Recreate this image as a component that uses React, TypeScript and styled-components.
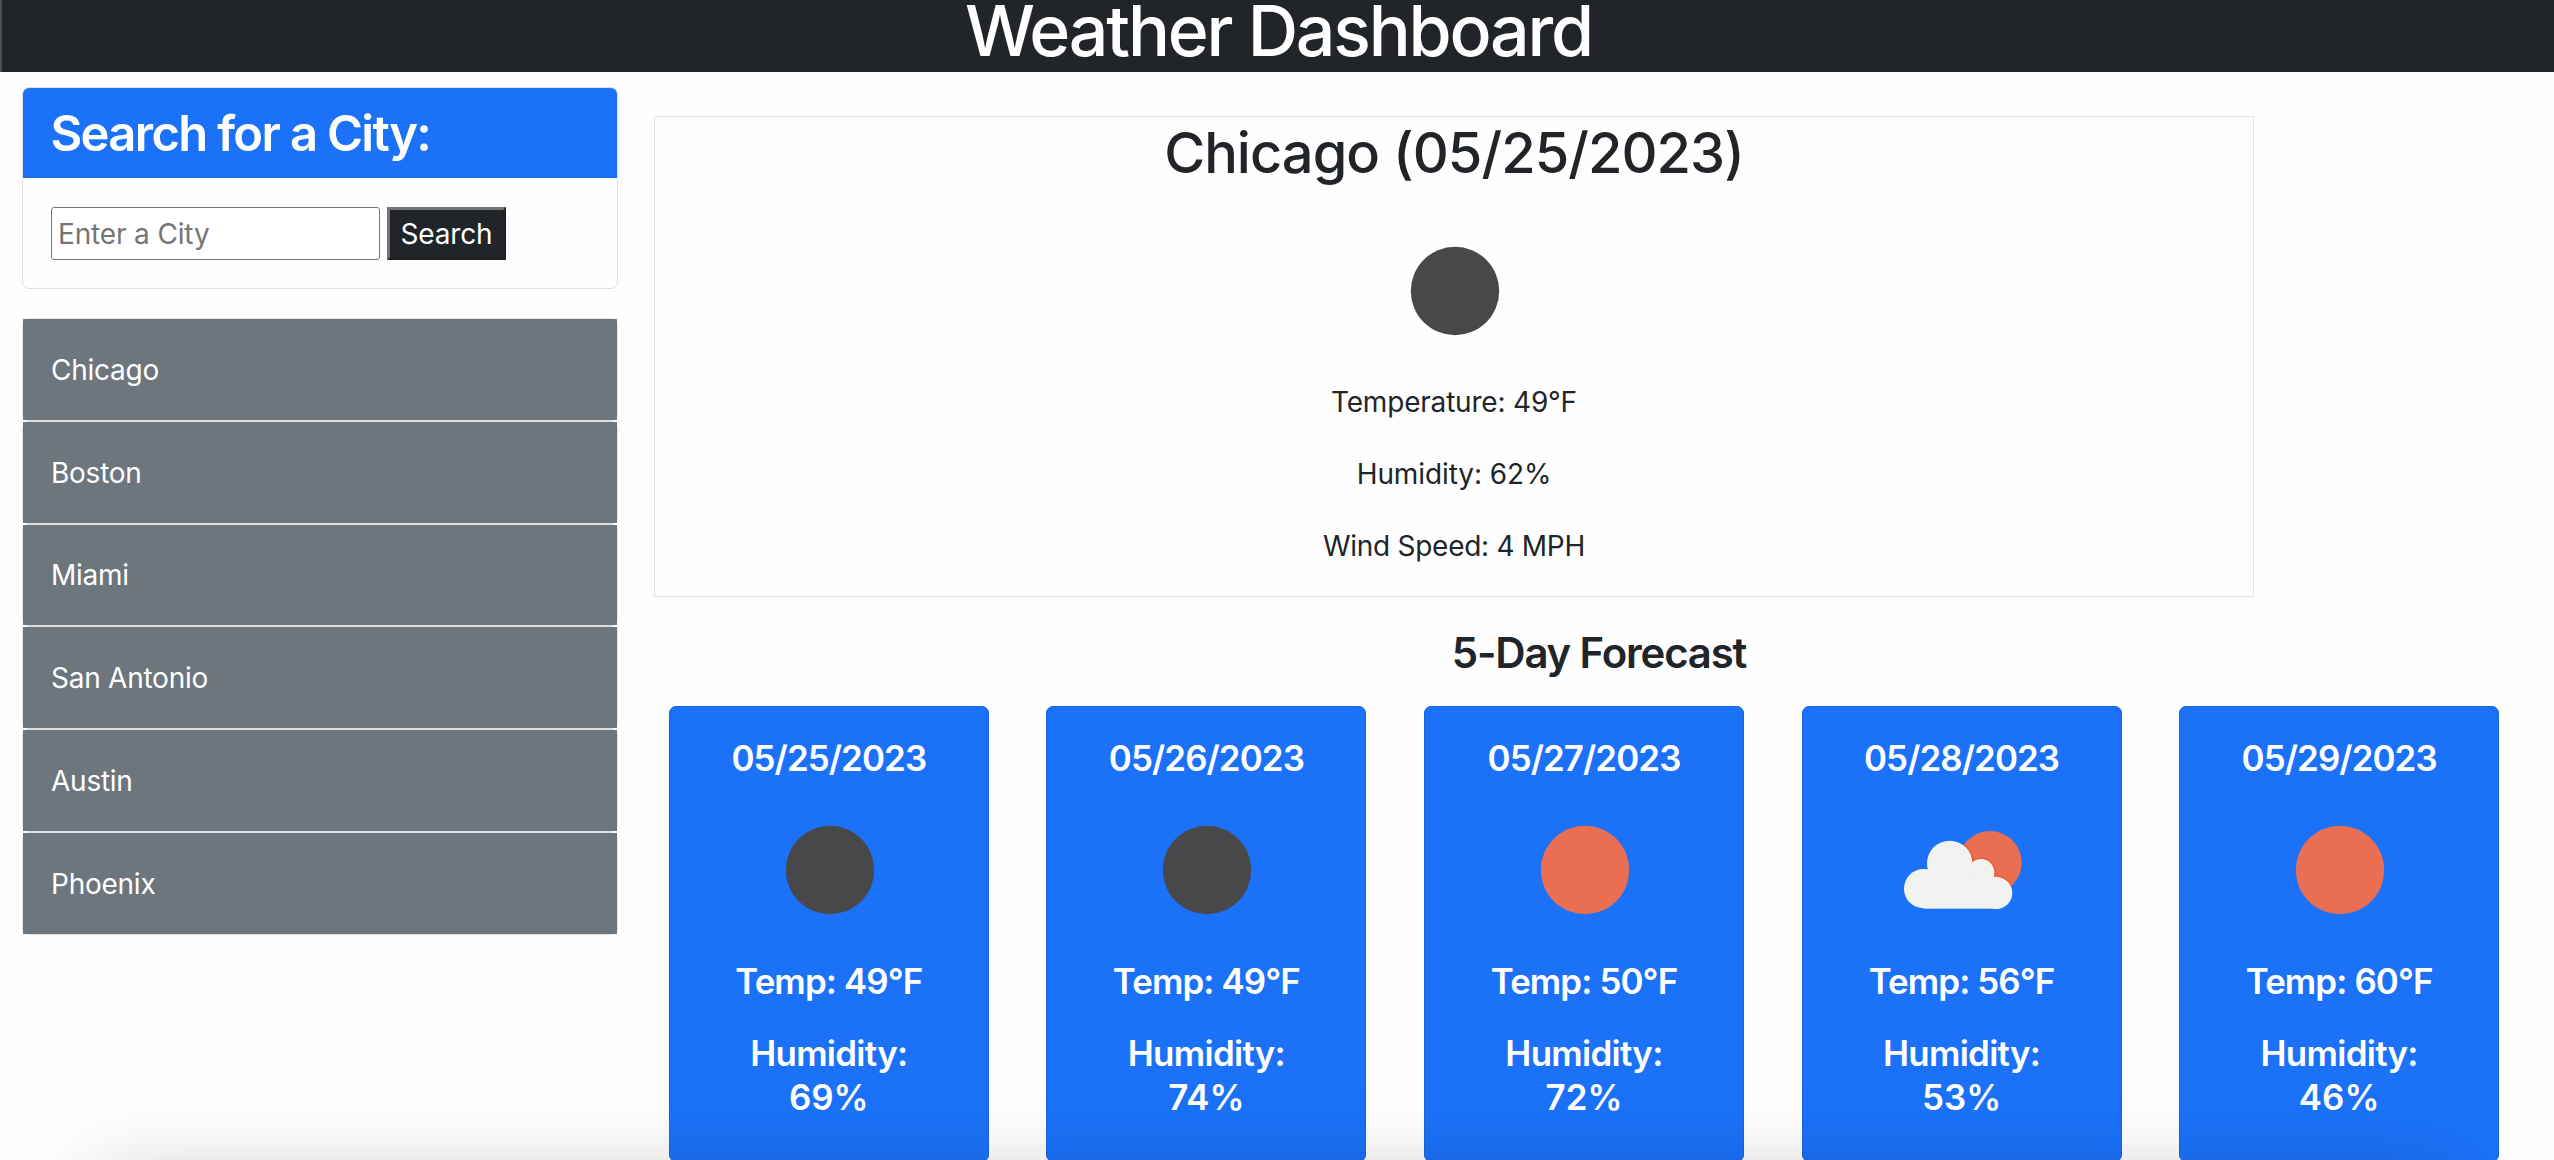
import React from "react";
import styled, { createGlobalStyle } from "styled-components";

const GlobalStyle = createGlobalStyle`
  *, *::before, *::after { box-sizing: border-box; }
  html, body { margin: 0; height: 1160px; overflow: hidden; }
  body {
    background: #fefefe;
    color: #212529;
    font-family: Inter, "Liberation Sans", sans-serif;
    font-size: 28px;
    line-height: 43.2px;
  }
  h1, h2, h3, h4, h5, p { margin: 0; font-weight: 600; }
`;

const Page = styled.div`
  height: 1160px;
  overflow: hidden;
`;

const Header = styled.header`
  height: 72px;
  background: #212529;
  border-left: 2px solid #4a4e52;
  text-align: center;
`;

const Title = styled.h1`
  color: #fff;
  font-size: 69.8px;
  font-weight: 550;
  line-height: 61px;
  letter-spacing: -2.2px;
  padding-left: 1px;
`;

const Layout = styled.main`
  display: flex;
  align-items: flex-start;
`;

const Sidebar = styled.aside`
  width: 596px;
  margin: 15px 0 0 22px;
  flex: none;
`;

const SearchCard = styled.section`
  height: 202px;
  border: 1px solid #dfdfdf;
  border-radius: 7px;
  overflow: hidden;
`;

const SearchHeader = styled.div`
  height: 90px;
  padding: 16px 27.4px 12px;
  background: #1b72f9;
  border-bottom: 1px solid #1a67df;
`;

const SearchTitle = styled.h3`
  color: #fff;
  font-size: 48.9px;
  line-height: 60.5px;
  letter-spacing: -1.65px;
`;

const SearchForm = styled.form`
  display: flex;
  gap: 7px;
  padding: 29px 28px;
`;

const CityInput = styled.input`
  width: 329px;
  height: 53px;
  padding: 2px 6px;
  border: 1px solid #767676;
  border-radius: 3px;
  background: #fff;
  font: inherit;
  letter-spacing: -0.15px;
  &::placeholder { color: #757575; }
`;

const SearchButton = styled.button`
  width: 119px;
  height: 53px;
  padding: 0;
  border: 3px solid;
  border-color: #767676 #212121 #212121 #767676;
  border-radius: 0;
  background: #212529;
  color: #fff;
  font: inherit;
  line-height: 46px;
  letter-spacing: -0.17px;
`;

const CityList = styled.div`
  margin-top: 29px;
`;

const CityCard = styled.div`
  height: 102.8px;
  border: 1px solid #dfdfdf;
  border-radius: 7px;
`;

const CityBody = styled.div`
  height: 100.8px;
  padding: 29.8px 28px 27.8px;
  background: #6d757d;
  color: #fff;
  letter-spacing: -0.25px;
`;

const Content = styled.div`
  margin-left: 36px;
  width: 1890px;
`;

const Current = styled.section`
  width: 1600px;
  height: 481px;
  margin-top: 44px;
  padding-top: 1px;
  border: 1px solid #dee2e6;
  display: flex;
  flex-direction: column;
  align-items: center;
`;

const CityName = styled.h2`
  font-size: 55.9px;
  font-weight: 550;
  line-height: 69.1px;
  letter-spacing: -0.95px;
  margin-bottom: 14px;
`;

const Reading = styled.p<{ $tracking: number }>`
  font-weight: 400;
  margin-bottom: 28.8px;
  letter-spacing: ${(p) => p.$tracking}px;
`;

const IconSvg = styled.svg`
  display: block;
  width: 180px;
  height: 180px;
  flex: none;
`;

const ForecastTitle = styled.h4`
  margin: 30px 0 27px;
  text-align: center;
  font-size: 41.9px;
  line-height: 51.8px;
  letter-spacing: -1.15px;
`;

const ForecastRow = styled.section`
  display: grid;
  grid-template-columns: repeat(5, 320px);
  column-gap: 57.6px;
  padding-left: 14.8px;
`;

const DayCard = styled.article`
  height: 456px;
  padding-top: 29.8px;
  border: 1px solid #1964db;
  border-radius: 7px;
  background: #1b72f9;
  color: #fff;
  display: flex;
  flex-direction: column;
  align-items: center;
  text-align: center;
`;

const DayText = styled.h5<{ $gap?: number; $tracking?: number }>`
  font-size: 34.9px;
  line-height: 43.6px;
  letter-spacing: ${(p) => p.$tracking ?? -0.9}px;
  margin-bottom: ${(p) => p.$gap ?? 0}px;
`;

const BottomShade = styled.div`
  position: fixed;
  top: 1186px;
  left: 94px;
  width: 2362px;
  height: 300px;
  border-radius: 20px;
  box-shadow: 0 0 90px rgba(0, 0, 0, 0.26);
  pointer-events: none;
`;

type Sky = "clear-night" | "clear-day" | "few-clouds";

const CloudShape = () => (
  <>
    <circle cx="131" cy="236" r="59" />
    <circle cx="209" cy="160" r="68" />
    <circle cx="303" cy="187" r="40" />
    <circle cx="349" cy="249" r="48" />
    <rect x="131" y="200" width="218" height="96" />
  </>
);

const WeatherIcon = ({ sky }: { sky: Sky }) => (
  <IconSvg viewBox="0 0 180 180">
    {sky === "few-clouds" ? (
      <g transform="translate(8 30) scale(0.3333)">
        <defs>
          <clipPath id="sun">
            <circle cx="330" cy="158" r="95" />
          </clipPath>
          <filter id="soft">
            <feGaussianBlur stdDeviation="3" />
          </filter>
        </defs>
        <circle cx="330" cy="158" r="95" fill="#ea6f52" />
        <g clipPath="url(#sun)">
          <g fill="#ec5733" stroke="#ec5733" strokeWidth="6" filter="url(#soft)">
            <CloudShape />
          </g>
        </g>
        <g fill="#f2f2f0">
          <CloudShape />
        </g>
      </g>
    ) : (
      <circle cx="91" cy="90" r="44.2" fill={sky === "clear-day" ? "#ea6f52" : "#48484a"} />
    )}
  </IconSvg>
);

const cities = ["Chicago", "Boston", "Miami", "San Antonio", "Austin", "Phoenix"];

const forecast: { date: string; sky: Sky; temp: number; humidity: number }[] = [
  { date: "05/25/2023", sky: "clear-night", temp: 49, humidity: 69 },
  { date: "05/26/2023", sky: "clear-night", temp: 49, humidity: 74 },
  { date: "05/27/2023", sky: "clear-day", temp: 50, humidity: 72 },
  { date: "05/28/2023", sky: "few-clouds", temp: 56, humidity: 53 },
  { date: "05/29/2023", sky: "clear-day", temp: 60, humidity: 46 },
];

export default function App() {
  return (
    <Page>
      <GlobalStyle />
      <Header>
        <Title>Weather Dashboard</Title>
      </Header>
      <Layout>
        <Sidebar>
          <SearchCard>
            <SearchHeader>
              <SearchTitle>Search for a City:</SearchTitle>
            </SearchHeader>
            <SearchForm>
              <CityInput placeholder="Enter a City" />
              <SearchButton type="button">Search</SearchButton>
            </SearchForm>
          </SearchCard>
          <CityList>
            {cities.map((city) => (
              <CityCard key={city}>
                <CityBody>{city}</CityBody>
              </CityCard>
            ))}
          </CityList>
        </Sidebar>
        <Content>
          <Current>
            <CityName>Chicago (05/25/2023)</CityName>
            <WeatherIcon sky="clear-night" />
            <Reading $tracking={-0.2}>Temperature: 49°F</Reading>
            <Reading $tracking={-0.1}>Humidity: 62%</Reading>
            <Reading $tracking={-0.28}>Wind Speed: 4 MPH</Reading>
          </Current>
          <ForecastTitle>5-Day Forecast</ForecastTitle>
          <ForecastRow>
            {forecast.map((day) => (
              <DayCard key={day.date}>
                <DayText>{day.date}</DayText>
                <WeatherIcon sky={day.sky} />
                <DayText $gap={28.4}>Temp: {day.temp}°F</DayText>
                <DayText $tracking={-0.7}>Humidity:</DayText>
                <DayText $tracking={0}>{day.humidity}%</DayText>
              </DayCard>
            ))}
          </ForecastRow>
        </Content>
      </Layout>
      <BottomShade />
    </Page>
  );
}
